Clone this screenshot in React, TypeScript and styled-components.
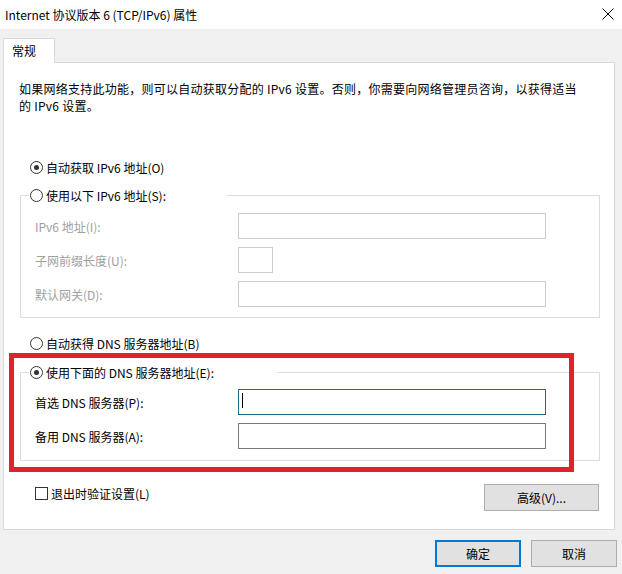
import React from "react";
import styled, { createGlobalStyle } from "styled-components";

const GlobalStyle = createGlobalStyle`
  html, body { margin: 0; padding: 0; background: #f0f0f0; }
  body {
    font-family: "Microsoft YaHei UI", "Noto Sans CJK SC", "Noto Sans", sans-serif;
    font-size: 12px;
    color: #000;
  }
  * { box-sizing: border-box; }
`;

const Window = styled.div`
  width: 622px;
  height: 574px;
  display: flex;
  flex-direction: column;
  background: #f0f0f0;
  overflow: hidden;
`;

const TitleBar = styled.div`
  height: 29px;
  flex: none;
  background: #fff;
  display: flex;
  align-items: center;
  justify-content: space-between;
  padding: 0 8px 1px 5px;
`;

const TitleText = styled.span`
  line-height: 17px;
  white-space: nowrap;
`;

const CloseBtn = styled.span`
  width: 12px;
  height: 12px;
  display: flex;
`;

const Body = styled.div`
  flex: 1;
  display: flex;
  flex-direction: column;
  padding: 9px 7px 0 3px;
`;

const TabStrip = styled.div`
  display: flex;
  height: 24px;
`;

const Tab = styled.div`
  width: 52px;
  height: 25px;
  margin-bottom: -1px;
  background: #fff;
  border: 1px solid #d9d9d9;
  border-bottom: none;
  padding: 3px 0 0 8px;
  line-height: 17px;
  position: relative;
  z-index: 1;
`;

const Panel = styled.div`
  position: relative;
  height: 468px;
  background: #fff;
  border: 1px solid #d9d9d9;
  display: flex;
  flex-direction: column;
`;

const Description = styled.p`
  margin: 0;
  padding: 17px 15px 0 15px;
  line-height: 17px;
  letter-spacing: 0.25px;
`;

const RadioRow = styled.div<{ $mt: number }>`
  margin-top: ${(p) => p.$mt}px;
  padding-left: 26px;
  display: flex;
`;

const RadioLabel = styled.label`
  display: flex;
  width: fit-content;
  align-items: center;
  gap: 3px;
  height: 17px;
  line-height: 17px;
  white-space: nowrap;
`;

const RadioCircle = styled.span<{ $checked?: boolean }>`
  width: 13px;
  height: 13px;
  flex: none;
  border: 1px solid #333;
  border-radius: 50%;
  background: #fff;
  display: flex;
  align-items: center;
  justify-content: center;
  &::after {
    content: "";
    width: 5px;
    height: 5px;
    border-radius: 50%;
    background: #333;
    display: ${(p) => (p.$checked ? "block" : "none")};
  }
`;

const Group = styled.fieldset<{ $mt: number }>`
  margin: ${(p) => p.$mt}px 14px 0 16px;
  padding: 0;
  border: 1px solid #dcdcdc;
  min-inline-size: 0;
`;

const Legend = styled.legend<{ $w: number }>`
  width: ${(p) => p.$w}px;
  height: 17px;
  margin-left: 8px;
  padding: 0 0 0 1px;
  line-height: 17px;
  background: #fff;
`;

const FieldGrid = styled.div<{ $pt: number; $pb: number }>`
  display: grid;
  grid-template-columns: 203px 308px;
  row-gap: 8px;
  align-items: center;
  padding: ${(p) => p.$pt}px 0 ${(p) => p.$pb}px 14px;
`;

const FieldLabel = styled.span<{ $disabled?: boolean }>`
  line-height: 17px;
  color: ${(p) => (p.$disabled ? "#a0a0a0" : "#000")};
  white-space: nowrap;
`;

type BoxState = "disabled" | "focused" | "normal";

const TextBox = styled.div<{ $state: BoxState; $w?: number }>`
  width: ${(p) => (p.$w ? `${p.$w}px` : "100%")};
  height: 26px;
  background: #fff;
  border: 1px solid
    ${(p) =>
      p.$state === "disabled"
        ? "#cccccc"
        : p.$state === "focused"
        ? "#1d6f86"
        : "#7a7a7a"};
  padding: 3px 0 0 3px;
`;

const Caret = styled.span`
  display: block;
  width: 1px;
  height: 15px;
  background: #000;
`;

const BottomRow = styled.div`
  margin-top: 23px;
  padding: 0 15px 0 31px;
  display: flex;
  justify-content: space-between;
  align-items: flex-start;
`;

const CheckLabel = styled.label`
  margin-top: 1px;
  display: flex;
  align-items: center;
  gap: 3px;
  line-height: 17px;
  white-space: nowrap;
`;

const CheckBox = styled.span`
  width: 13px;
  height: 13px;
  flex: none;
  border: 1px solid #333;
  background: #fff;
`;

const Button = styled.button<{ $default?: boolean; $w: number }>`
  width: ${(p) => p.$w}px;
  height: 27px;
  padding: 0;
  font: inherit;
  color: #000;
  background: #e1e1e1;
  border: ${(p) => (p.$default ? "2px solid #0078d7" : "1px solid #adadad")};
  display: flex;
  align-items: center;
  justify-content: center;
  line-height: 17px;
`;

const Footer = styled.div`
  margin-top: 10px;
  display: flex;
  justify-content: flex-end;
  gap: 10px;
  margin-right: -2px;
`;

const Highlight = styled.div`
  position: absolute;
  left: 5px;
  top: 290px;
  width: 565px;
  height: 119px;
  border: 5px solid #db2430;
  pointer-events: none;
`;

export default function App() {
  return (
    <>
      <GlobalStyle />
      <Window>
        <TitleBar>
          <TitleText>Internet 协议版本 6 (TCP/IPv6) 属性</TitleText>
          <CloseBtn>
            <svg width="12" height="12" viewBox="0 0 12 12">
              <path d="M0.5 0.5 L11.5 11.5 M11.5 0.5 L0.5 11.5" stroke="#000" strokeWidth="1" fill="none" />
            </svg>
          </CloseBtn>
        </TitleBar>
        <Body>
          <TabStrip>
            <Tab>常规</Tab>
          </TabStrip>
          <Panel>
            <Description>
              如果网络支持此功能，则可以自动获取分配的 IPv6 设置。否则，你需要向网络管理员咨询，以获得适当
              <br />
              的 IPv6 设置。
            </Description>

            <RadioRow $mt={45}>
              <RadioLabel>
                <RadioCircle $checked />
                自动获取 IPv6 地址(O)
              </RadioLabel>
            </RadioRow>

            <Group $mt={11}>
              <Legend $w={198}>
                <RadioLabel>
                  <RadioCircle />
                  使用以下 IPv6 地址(S):
                </RadioLabel>
              </Legend>
              <FieldGrid $pt={9} $pb={10}>
                <FieldLabel $disabled>IPv6 地址(I):</FieldLabel>
                <TextBox $state="disabled" />
                <FieldLabel $disabled>子网前缀长度(U):</FieldLabel>
                <TextBox $state="disabled" $w={35} />
                <FieldLabel $disabled>默认网关(D):</FieldLabel>
                <TextBox $state="disabled" />
              </FieldGrid>
            </Group>

            <RadioRow $mt={17}>
              <RadioLabel>
                <RadioCircle />
                自动获得 DNS 服务器地址(B)
              </RadioLabel>
            </RadioRow>

            <Group $mt={12}>
              <Legend $w={248}>
                <RadioLabel>
                  <RadioCircle $checked />
                  使用下面的 DNS 服务器地址(E):
                </RadioLabel>
              </Legend>
              <FieldGrid $pt={8} $pb={11}>
                <FieldLabel>首选 DNS 服务器(P):</FieldLabel>
                <TextBox $state="focused">
                  <Caret />
                </TextBox>
                <FieldLabel>备用 DNS 服务器(A):</FieldLabel>
                <TextBox $state="normal" />
              </FieldGrid>
            </Group>

            <BottomRow>
              <CheckLabel>
                <CheckBox />
                退出时验证设置(L)
              </CheckLabel>
              <Button $w={115}>高级(V)...</Button>
            </BottomRow>

            <Highlight />
          </Panel>
          <Footer>
            <Button $default $w={86}>确定</Button>
            <Button $w={86}>取消</Button>
          </Footer>
        </Body>
      </Window>
    </>
  );
}
